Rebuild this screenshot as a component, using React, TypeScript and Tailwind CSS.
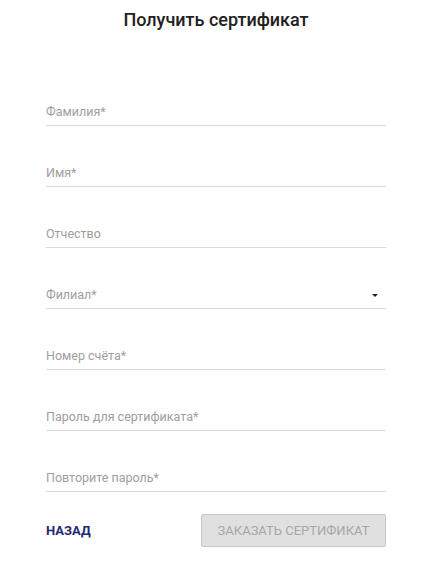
import React from "react";

const fields: { label: string; select?: boolean }[] = [
  { label: "Фамилия*" },
  { label: "Имя*" },
  { label: "Отчество" },
  { label: "Филиал*", select: true },
  { label: "Номер счёта*" },
  { label: "Пароль для сертификата*" },
  { label: "Повторите пароль*" },
];

const App: React.FC = () => {
  return (
    <div className="min-h-[571px] bg-white font-['Roboto',sans-serif]">
      <div className="ml-[46px] w-[340px] pt-[10px]">
        <h1 className="text-center text-[18px] leading-[20px] font-medium text-[#212121]">
          Получить сертификат
        </h1>

        <div className="mt-[35px] flex flex-col">
          {fields.map((f) => (
            <div
              key={f.label}
              className="flex h-[61px] items-end justify-between border-b border-[#d9d9d9] pb-[5px]"
            >
              <span className="text-[12.5px] leading-[16px] text-[#9e9e9e]">{f.label}</span>
              {f.select && (
                <svg width="10" height="10" viewBox="0 0 10 10" className="mb-[3px] mr-[6px]">
                  <path d="M2 4h6L5 7z" fill="#222" />
                </svg>
              )}
            </div>
          ))}
        </div>

        <div className="mt-[22px] flex items-center justify-between">
          <button className="text-[13px] font-bold uppercase text-[#1f2a6e]">Назад</button>
          <button
            disabled
            className="h-[33px] w-[185px] rounded-[2px] border border-[#c8c8c8] bg-[#e0e0e0] text-[13px] uppercase text-[#a6a6a6]"
          >
            Заказать сертификат
          </button>
        </div>
      </div>
    </div>
  );
};

export default App;
